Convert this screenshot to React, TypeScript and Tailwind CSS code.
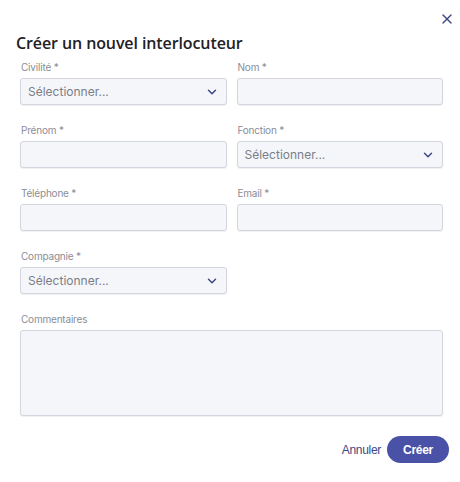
import { ChevronDown, X } from "lucide-react";

function Label({ text }: { text: string }) {
  return (
    <div className="text-[10px] leading-[14px] text-[#8a8d96] mb-[4px] ml-[1px] tracking-[-0.2px]">
      {text}
    </div>
  );
}

function SelectBox() {
  return (
    <div className="h-[27px] rounded-[3px] border border-[#d3d6de] bg-[#f5f6f9] shadow-[0_1px_1px_rgba(0,0,0,0.06)] flex items-center justify-between pl-[7px] pr-[7px]">
      <span className="text-[12px] text-[#7a7e88]">Sélectionner...</span>
      <ChevronDown size={14} strokeWidth={2.5} className="text-[#3e4786]" />
    </div>
  );
}

function InputBox() {
  return (
    <div className="h-[27px] rounded-[3px] border border-[#d3d6de] bg-[#f5f6f9] shadow-[0_1px_1px_rgba(0,0,0,0.06)]" />
  );
}

function Field({ label, select }: { label: string; select?: boolean }) {
  return (
    <div>
      <Label text={label} />
      {select ? <SelectBox /> : <InputBox />}
    </div>
  );
}

export default function App() {
  return (
    <div
      className="w-[460px] h-[482px] bg-white relative"
      style={{ fontFamily: "Inter, 'Noto Sans', sans-serif" }}
    >
      <button className="absolute right-[5px] top-[11px] text-[#3e4786]">
        <X size={16} strokeWidth={2} />
      </button>
      <div className="pl-[20px] pr-[17px] pt-[32px]">
        <h1
          className="text-[16px] leading-[22px] font-semibold text-[#1f2024] -ml-[4px] mb-[6px] tracking-[-0.1px]"
          style={{ fontFamily: "'Open Sans', sans-serif" }}
        >
          Créer un nouvel interlocuteur
        </h1>
        <div className="grid grid-cols-2 gap-x-[10px] gap-y-[18px]">
          <Field label="Civilité *" select />
          <Field label="Nom *" />
          <Field label="Prénom *" />
          <Field label="Fonction *" select />
          <Field label="Téléphone *" />
          <Field label="Email *" />
          <Field label="Compagnie *" select />
          <div />
          <div className="col-span-2">
            <Label text="Commentaires" />
            <div className="h-[86px] rounded-[3px] border border-[#d3d6de] bg-[#f5f6f9] shadow-[0_1px_1px_rgba(0,0,0,0.06)]" />
          </div>
        </div>
        <div className="flex justify-end items-center gap-[6px] mt-[20px] -mr-[6px]">
          <button
            className="text-[12px] text-[#3e4786] tracking-[-0.3px]"
            style={{ fontFamily: "'Liberation Sans', Arial, sans-serif" }}
          >
            Annuler
          </button>
          <button
            className="h-[27px] w-[62px] rounded-full bg-[#4952a6] text-white text-[12px] font-bold tracking-[-0.3px]"
            style={{ fontFamily: "'Liberation Sans', Arial, sans-serif" }}
          >
            Créer
          </button>
        </div>
      </div>
    </div>
  );
}
